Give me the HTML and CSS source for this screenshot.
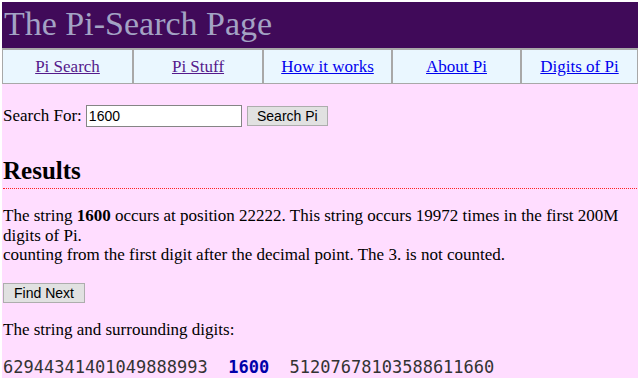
FILE: index.html
```html
<!DOCTYPE html>
<html>
<head>
<meta charset="utf-8">
<title>The Pi-Search Page</title>
<link rel="stylesheet" href="styles.css">
</head>
<body>
<div class="page">
  <header class="banner">The Pi-Search Page</header>
  <nav class="nav">
    <a class="visited" href="#">Pi Search</a>
    <a class="visited" href="#">Pi Stuff</a>
    <a href="#">How it works</a>
    <a href="#">About Pi</a>
    <a href="#">Digits of Pi</a>
  </nav>
  <main class="content">
    <form class="search">
      <label for="q">Search For:</label>
      <input id="q" class="field" type="text" value="1600">
      <button type="button" class="btn">Search Pi</button>
    </form>
    <h2 class="results">Results</h2>
    <p class="text">The string <b>1600</b> occurs at position 22222. This string occurs 19972 times in the first 200M digits of Pi.<br>counting from the first digit after the decimal point. The 3. is not counted.</p>
    <button type="button" class="btn next">Find Next</button>
    <p class="text">The string and surrounding digits:</p>
    <p class="digits">62944341401049888993  <b class="hit">1600</b>  51207678103588611660</p>
  </main>
</div>
</body>
</html>
```
FILE: styles.css
```css
html, body {
  margin: 0;
  padding: 0;
  background: #ffffff;
  height: 100%;
}
body {
  font-family: "Liberation Serif", "Times New Roman", serif;
  font-size: 17px;
  color: #000;
}
.page {
  margin: 2px 2px 0 2px;
  background: #ffddff;
  min-height: 376px;
}
.banner {
  background: #400a59;
  color: #a3a3c4;
  font-size: 34px;
  height: 46px;
  line-height: 44px;
  padding-left: 2px;
}
.nav {
  display: grid;
  grid-template-columns: 129px 130px 129px 129px 1fr;
  background: #eaf7ff;
  border: 1px solid #a8a8a8;
  border-top: 2px solid #a8a8a8;
  height: 33px;
}
.nav a {
  display: flex;
  align-items: center;
  justify-content: center;
  color: #0000ee;
  border-left: 2px solid #a8a8a8;
  font-size: 17px;
}
.nav a:first-child { border-left: 0; }
.nav a.visited { color: #551a8b; }
.content {
  padding: 0 1px;
}
.search {
  display: flex;
  align-items: center;
  margin: 21px 0 0 0;
  height: 22px;
}
.field {
  margin: 0 0 0 4px;
  width: 150px;
  height: 18px;
  border: 1px solid #858585;
  padding: 1px 2px;
  font-family: "Liberation Sans", Arial, sans-serif;
  font-size: 14px;
  background: #fff;
}
.btn {
  font-family: "Liberation Sans", Arial, sans-serif;
  font-size: 14px;
  background: #e1e1e1;
  border: 1px solid #adadad;
  color: #000;
  padding: 0 8px;
  height: 20px;
}
.search .btn {
  margin-left: 5px;
  width: 81px;
}
.results {
  font-size: 25px;
  font-weight: bold;
  margin: 29px 0 0 0;
  padding-bottom: 2px;
  border-bottom: 1px dotted #ff2020;
  line-height: 30px;
}
.text {
  margin: 17px 0 17px 0;
  line-height: 19.5px;
}
.next {
  width: 82px;
  padding: 0;
  margin-top: 1px;
}
.digits {
  font-family: "DejaVu Sans Mono", monospace;
  font-size: 17px;
  color: #333;
  white-space: pre;
  margin: 18px 0 0 0;
}
.hit {
  color: #0000aa;
  font-weight: bold;
}
```
